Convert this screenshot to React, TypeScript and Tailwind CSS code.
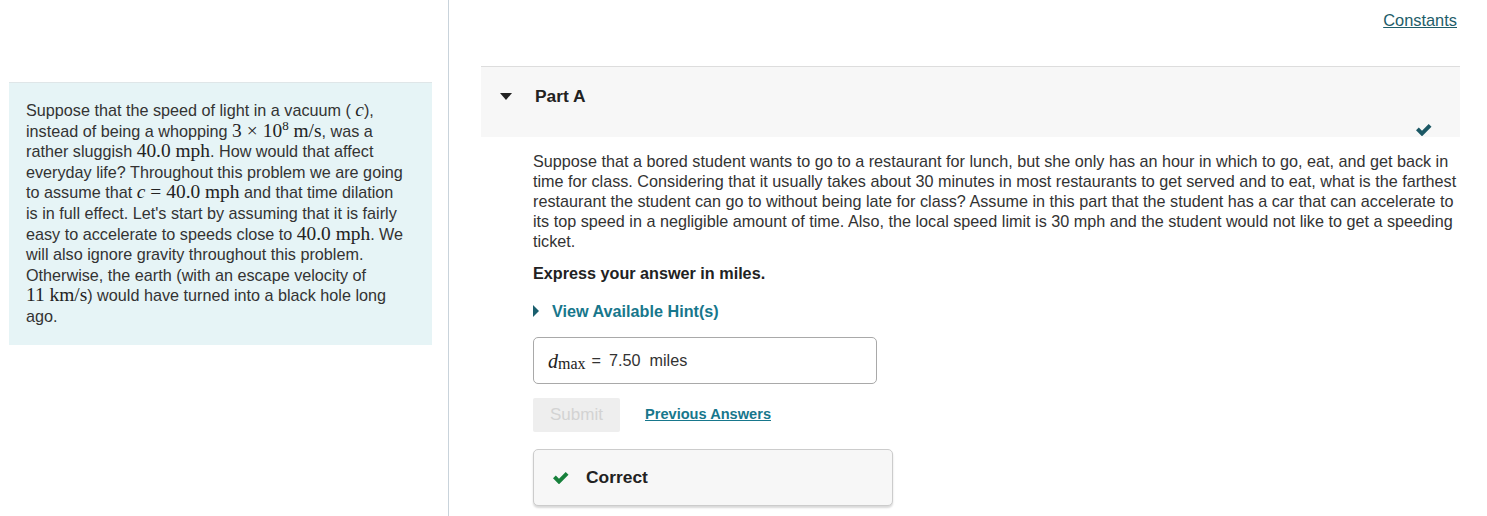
import React from 'react'

const serif = { fontFamily: '"Liberation Serif", "DejaVu Serif", serif' }

const M = ({ children, italic }: { children: React.ReactNode; italic?: boolean }) => (
    <span className={`text-[19.4px] leading-none whitespace-nowrap text-[#222] ${italic ? 'italic' : ''}`} style={serif}>{children}</span>
)

const Op = ({ children }: { children: React.ReactNode }) => <span className="mx-[5px]">{children}</span>

const Intro = () => (
    <div className="ml-[9px] mt-[82px] w-[423px] border-t border-[#dfe6e8] bg-[#e6f4f6] pl-[17px] pr-[27px] pt-[17px] pb-[18px] text-[16.2px] leading-[20.6px] text-[#333]">
        <p>
            Suppose that the speed of light in a vacuum ( <M italic>c</M>), instead of being a whopping{' '}
            <M>3<Op>×</Op>10<sup className="text-[13px]">8</sup> m/s</M>, was a rather sluggish <M>40.0 mph</M>.
            How would that affect everyday life? Throughout this problem we are going to assume that{' '}
            <M><i>c</i><Op>=</Op>40.0 mph</M> and that time dilation is in full effect. Let's start by assuming that it is fairly
            easy to accelerate to speeds close to <M>40.0 mph</M>. We will also ignore gravity throughout this problem.
            Otherwise, the earth (with an escape velocity of <M>11 km/s</M>) would have turned into a black hole long ago.
        </p>
    </div>
)

const Check = ({ className }: { className?: string }) => (
    <svg viewBox="0 0 16 12" className={className} fill="currentColor">
        <path d="M0 6.3 L2.8 3.5 L6 6.7 L12.7 0 L15.5 2.8 L6 12.3 Z" />
    </svg>
)

const PartA = () => (
    <div className="mt-[36px]">
        <div className="border-t border-[#dddddd] bg-[#f7f7f7] h-[71px] pl-[19px] pr-[28px] pt-[19px]">
            <div className="flex items-center h-5">
                <svg viewBox="0 0 12 7" className="w-3 h-[7px] text-[#222]" fill="currentColor">
                    <path d="M0 0 H12 L6 7 Z" />
                </svg>
                <span className="ml-[23px] text-[17.4px] font-bold text-[#222]">Part A</span>
            </div>
            <div className="flex justify-end mt-[18px]">
                <Check className="w-4 h-3 text-[#1c5865]" />
            </div>
        </div>

        <div className="pl-[52px] pt-[14px] text-[16.2px] text-[#333]">
            <p className="leading-5">
                Suppose that a bored student wants to go to a restaurant for lunch, but she only has an hour in which to go, eat,
                and get back in time for class. Considering that it usually takes about 30 minutes in most restaurants to get
                served and to eat, what is the farthest restaurant the student can go to without being late for class? Assume in
                this part that the student has a car that can accelerate to its top speed in a negligible amount of time. Also,
                the local speed limit is 30 mph and the student would not like to get a speeding ticket.
            </p>
            <p className="mt-3 font-bold leading-5 text-[#222]">Express your answer in miles.</p>

            <div className="mt-[18px] flex items-center h-5">
                <svg viewBox="0 0 6 12" className="w-[6px] h-3 text-[#1a5f6e]" fill="currentColor">
                    <path d="M0 0 L6 6 L0 12 Z" />
                </svg>
                <span className="ml-[13px] font-bold text-[#17778c]">View Available Hint(s)</span>
            </div>

            <div className="mt-4 w-[344px] h-[47px] rounded-[5px] border border-[#a9a9a9] bg-white flex items-center pl-[14px]">
                <span className="text-[20px] italic text-[#222]" style={serif}>d</span>
                <span className="text-[16px] text-[#222] relative top-[3px]" style={serif}>max</span>
                <span className="ml-[6px] text-[#333]">=</span>
                <span className="ml-[8px] text-[#333]">7.50</span>
                <span className="ml-[9px] text-[#333]">miles</span>
            </div>

            <div className="mt-[14px] flex items-center">
                <div className="w-[87px] h-[34px] bg-[#eeeeee] rounded-[2px] flex items-center justify-center text-[17px] text-[#d3d3d3]">
                    Submit
                </div>
                <a className="ml-[25px] text-[14.6px] font-bold text-[#17778c] underline">Previous Answers</a>
            </div>

            <div className="mt-[17px] w-[360px] h-[57px] rounded-[5px] border border-[#cccccc] bg-[#f7f7f7] shadow-[0_2px_2px_rgba(0,0,0,0.15)] flex items-center pl-[19px]">
                <Check className="w-4 h-3 text-[#17803b]" />
                <span className="ml-[17px] text-[17.4px] font-bold text-[#222]">Correct</span>
            </div>
        </div>
    </div>
)

export default function App() {
    return (
        <div className="flex w-[1487px] h-[516px] bg-white overflow-hidden" style={{ fontFamily: '"Liberation Sans", Arial, sans-serif' }}>
            <div className="w-[448px] shrink-0">
                <Intro />
            </div>
            <div className="w-px bg-[#c9d3db] shrink-0" />
            <div className="flex-1 pl-8 pr-[27px]">
                <div className="flex justify-end pt-[10px] pr-[3px]">
                    <a className="text-[16.4px] text-[#1e5d69] underline leading-5">Constants</a>
                </div>
                <PartA />
            </div>
        </div>
    )
}
